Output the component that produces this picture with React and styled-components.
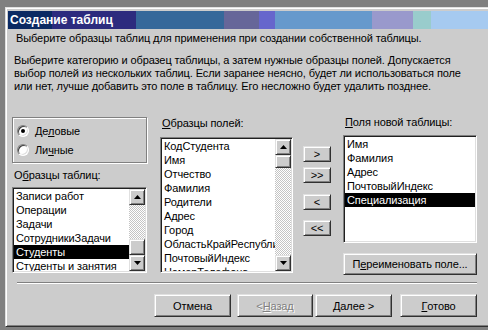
import React from 'react';
import styled, { createGlobalStyle } from 'styled-components';

const GlobalStyle = createGlobalStyle`
  html, body { margin: 0; padding: 0; }
  body {
    background: #808080;
    width: 488px;
    height: 330px;
    overflow: hidden;
    font-family: "Liberation Sans", Arial, sans-serif;
    font-size: 11px;
    letter-spacing: -0.1px;
    color: #000;
  }
`;

const Window = styled.div`
  margin: 7px 0 0 5px;
  width: 500px;
  height: 320px;
  box-sizing: border-box;
  background: #cccccc;
  border-top: 1px solid #e0e0e0;
  border-left: 1px solid #e0e0e0;
  border-bottom: 1px solid #303030;
  box-shadow: inset 1px 1px #fff, inset 0 -1px #808080;
  padding: 3px 0 0 2px;
  overflow: hidden;
`;

const TitleBar = styled.div`
  height: 18px;
  line-height: 18px;
  padding-left: 2px;
  color: #fff;
  font-weight: bold;
  font-size: 12px;
  letter-spacing: 0;
  background: linear-gradient(
    to right,
    #0b2a63 0 44px,
    #2c2b7e 44px 128px,
    #35689a 128px 216px,
    #666699 216px 251px,
    #6666cc 251px 267px,
    #6699cc 267px 364px,
    #9999cc 364px 405px,
    #99cccc 405px 423px,
    #a6caf0 423px
  );
`;

const Intro = styled.div`
  margin: 3px 0 0 8px;
  line-height: 13px;
`;

const Para = styled.div`
  margin: 9px 0 0 6px;
  line-height: 13px;
  white-space: nowrap;
`;

const Main = styled.div`
  display: flex;
  align-items: flex-start;
  height: 160px;
  margin-top: 22px;
`;

const Column = styled.div`
  display: flex;
  flex-direction: column;
  width: ${p => p.$width}px;
  margin-left: ${p => p.$left}px;
  padding-top: ${p => p.$top || 0}px;
`;

const GroupBox = styled.div`
  margin-top: 2px;
  border: 1px solid #808080;
  box-shadow: inset 1px 1px #fff, 1px 1px #fff;
  padding: 3px 0 3px 4px;
`;

const RadioRow = styled.label`
  display: flex;
  align-items: center;
  height: 19px;
  gap: 6px;
`;

const RadioCircle = styled.span`
  width: 10px;
  height: 10px;
  border-radius: 50%;
  background: #fff;
  border: 1px solid;
  border-color: #808080 #fff #fff #808080;
  box-shadow: inset 1px 1px #404040, inset -1px -1px #dfdfdf;
  display: flex;
  align-items: center;
  justify-content: center;

  &::after {
    content: "";
    width: 4px;
    height: 4px;
    border-radius: 50%;
    background: ${p => (p.$checked ? '#000' : 'transparent')};
  }
`;

const Label = styled.div`
  line-height: 14px;
  height: 14px;
  margin-top: ${p => p.$top || 0}px;
  padding-left: ${p => p.$indent || 2}px;
`;

const ListBox = styled.div`
  display: flex;
  height: ${p => p.$height}px;
  margin-top: ${p => p.$top || 0}px;
  box-sizing: border-box;
  background: #fff;
  border: 1px solid;
  border-color: #808080 #fff #fff #808080;
  box-shadow: inset 1px 1px #202020, inset -1px -1px #dfdfdf;
  padding: 1px;
  overflow: hidden;
`;

const Items = styled.div`
  flex: 1;
  min-width: 0;
  overflow: hidden;
`;

const Item = styled.div`
  height: 14px;
  line-height: 14px;
  padding-left: 2px;
  white-space: nowrap;
  overflow: hidden;
  background: ${p => (p.$selected ? '#000' : 'transparent')};
  color: ${p => (p.$selected ? '#fff' : '#000')};
`;

const ScrollBar = styled.div`
  width: 16px;
  display: flex;
  flex-direction: column;
`;

const Track = styled.div`
  flex: 1;
  display: flex;
  flex-direction: column;
  justify-content: ${p => (p.$thumbAt === 'end' ? 'flex-end' : 'flex-start')};
  background: repeating-conic-gradient(#fff 0 25%, #c4c4c4 0 50%) 0 0 / 2px 2px;
`;

const Raised = styled.div`
  box-sizing: border-box;
  background: #cccccc;
  border: 1px solid;
  border-color: #e0e0e0 #303030 #303030 #e0e0e0;
  box-shadow: inset 1px 1px #fff, inset -1px -1px #808080;
`;

const ScrollBtn = styled(Raised)`
  width: 16px;
  height: 16px;
  display: flex;
  align-items: center;
  justify-content: center;
`;

const Thumb = styled(Raised)`
  width: 16px;
  height: ${p => p.$size}px;
`;

const Button = styled(Raised)`
  width: ${p => p.$width}px;
  height: ${p => p.$height}px;
  margin-top: ${p => p.$top || 0}px;
  margin-left: ${p => p.$left || 0}px;
  display: flex;
  align-items: center;
  justify-content: center;
  color: ${p => (p.$disabled ? '#808080' : '#000')};
  text-shadow: ${p => (p.$disabled ? '1px 1px #fff' : 'none')};
  white-space: nowrap;
`;

const Separator = styled.div`
  margin: 7px 0 0 9px;
  width: 460px;
  border-top: 1px solid #808080;
  border-bottom: 1px solid #fff;
`;

const ButtonRow = styled.div`
  display: flex;
  margin: 10px 0 0 146px;
`;

const Arrow = ({ down }) => (
  <svg width="7" height="4" viewBox="0 0 7 4">
    <polygon points={down ? '0,0 7,0 3.5,4' : '3.5,0 7,4 0,4'} fill="#000" />
  </svg>
);

const List = ({ items, selected, height, top, thumbAt, thumbSize = 16 }) => (
  <ListBox $height={height} $top={top}>
    <Items>
      {items.map(it => (
        <Item key={it} $selected={it === selected}>{it}</Item>
      ))}
    </Items>
    {thumbAt && (
      <ScrollBar>
        <ScrollBtn><Arrow /></ScrollBtn>
        <Track $thumbAt={thumbAt}>
          <Thumb $size={thumbSize} />
        </Track>
        <ScrollBtn><Arrow down /></ScrollBtn>
      </ScrollBar>
    )}
  </ListBox>
);

const tables = ['Записи работ', 'Операции', 'Задачи', 'СотрудникиЗадачи', 'Студенты', 'Студенты и занятия'];
const fields = ['КодСтудента', 'Имя', 'Отчество', 'Фамилия', 'Родители', 'Адрес', 'Город', 'ОбластьКрайРеспублика', 'ПочтовыйИндекс', 'НомерТелефона'];
const newFields = ['Имя', 'Фамилия', 'Адрес', 'ПочтовыйИндекс', 'Специализация'];

export default function App() {
  return (
    <>
      <GlobalStyle />
      <Window>
        <TitleBar>Создание таблиц</TitleBar>
        <Intro>Выберите образцы таблиц для применения при создании собственной таблицы.</Intro>
        <Para>
          Выберите категорию и образец таблицы, а затем нужные образцы полей. Допускается<br />
          выбор полей из нескольких таблиц. Если заранее неясно, будет ли использоваться поле<br />
          или нет, лучше добавить это поле в таблицу. Его несложно будет удалить позднее.
        </Para>
        <Main>
          <Column $width={135} $left={4}>
            <GroupBox>
              <RadioRow><RadioCircle $checked /><span>Де<u>л</u>овые</span></RadioRow>
              <RadioRow><RadioCircle /><span>Ли<u>ч</u>ные</span></RadioRow>
            </GroupBox>
            <Label $top={5}>О<u>б</u>разцы таблиц:</Label>
            <List items={tables} selected="Студенты" height={86} top={5} thumbAt="end" />
          </Column>
          <Column $width={133} $left={13} $top={1}>
            <Label><u>О</u>бразцы полей:</Label>
            <List items={fields} height={136} top={7} thumbAt="start" thumbSize={13} />
          </Column>
          <Column $width={28} $left={10} $top={31}>
            <Button $width={28} $height={16}>&gt;</Button>
            <Button $width={28} $height={16} $top={5}>&gt;&gt;</Button>
            <Button $width={28} $height={16} $top={11}>&lt;</Button>
            <Button $width={28} $height={16} $top={10}>&lt;&lt;</Button>
          </Column>
          <Column $width={134} $left={12}>
            <Label><u>П</u>оля новой таблицы:</Label>
            <List items={newFields} selected="Специализация" height={108} top={6} />
            <Button $width={134} $height={22} $top={10}>П<u>е</u>реименовать поле...</Button>
          </Column>
        </Main>
        <Separator />
        <ButtonRow>
          <Button $width={77} $height={23}>Отмена</Button>
          <Button $width={76} $height={23} $left={6} $disabled>&lt; <u>Н</u>азад</Button>
          <Button $width={77} $height={23} $left={2}><u>Д</u>алее &gt;</Button>
          <Button $width={77} $height={23} $left={8}><u>Г</u>отово</Button>
        </ButtonRow>
      </Window>
    </>
  );
}
